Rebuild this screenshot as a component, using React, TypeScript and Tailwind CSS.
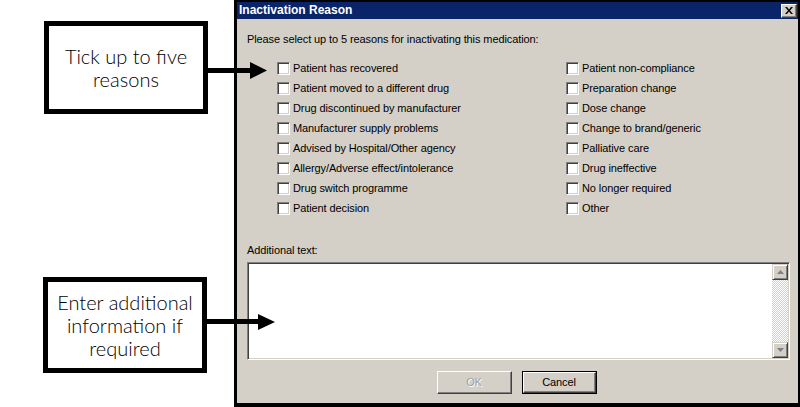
import React from "react";

const LEFT_REASONS = [
  "Patient has recovered",
  "Patient moved to a different drug",
  "Drug discontinued by manufacturer",
  "Manufacturer supply problems",
  "Advised by Hospital/Other agency",
  "Allergy/Adverse effect/intolerance",
  "Drug switch programme",
  "Patient decision",
];

const RIGHT_REASONS = [
  "Patient non-compliance",
  "Preparation change",
  "Dose change",
  "Change to brand/generic",
  "Palliative care",
  "Drug ineffective",
  "No longer required",
  "Other",
];

const SUNKEN =
  "border border-t-[#808080] border-l-[#808080] border-r-white border-b-white shadow-[inset_1px_1px_0_#404040,inset_-1px_-1px_0_#d4d0c8]";

const RAISED =
  "border border-t-white border-l-white border-r-[#404040] border-b-[#404040] shadow-[inset_-1px_-1px_0_#808080]";

const SCROLL_BTN =
  "flex h-4 w-4 items-center justify-center border border-t-[#d4d0c8] border-l-[#d4d0c8] border-r-[#404040] border-b-[#404040] bg-[#d4d0c8] shadow-[inset_1px_1px_0_#fff,inset_-1px_-1px_0_#808080]";

function Checkbox({ label }: { label: string }) {
  return (
    <div className="flex h-5 items-center">
      <span className={`h-[13px] w-[13px] shrink-0 bg-white ${SUNKEN}`} />
      <span className="ml-[3px] whitespace-nowrap">{label}</span>
    </div>
  );
}

function Callout({ lines, className }: { lines: string[]; className: string }) {
  return (
    <div
      className={`flex w-[164px] flex-col items-center justify-center border-[5px] border-black bg-white text-center font-['Lato',sans-serif] text-[20px] font-light leading-[23px] text-black ${className}`}
    >
      {lines.map((l) => (
        <span key={l}>{l}</span>
      ))}
    </div>
  );
}

export default function App() {
  return (
    <div className="relative flex h-[407px] w-[800px] overflow-hidden bg-white">
      {/* callouts column */}
      <div className="flex w-[234px] shrink-0 flex-col pl-[43px]">
        <Callout lines={["Tick up to five", "reasons"]} className="ml-px mt-[21px] h-[93px]" />
        <Callout
          lines={["Enter additional", "information if", "required"]}
          className="mt-[163px] h-[96px]"
        />
      </div>

      {/* dialog */}
      <div className="flex flex-1 flex-col border-b-4 border-l-[3px] border-r-2 border-t-2 border-black bg-[#d4d0c8] font-['Liberation_Sans',Arial,sans-serif] text-[11px] leading-[13px] tracking-[-0.1px] text-black">
        <div className="flex h-[17px] items-center justify-between bg-[#0a246a] pl-[2px] pr-px">
          <span className="text-[12px] font-bold tracking-normal text-white">Inactivation Reason</span>
          <button className={`flex h-[14px] w-4 items-center justify-center bg-[#d4d0c8] ${RAISED}`}>
            <svg width="8" height="7" viewBox="0 0 8 7">
              <path d="M0 0h2l2 2.5L6 0h2L5 3.5 8 7H6L4 4.5 2 7H0l3-3.5z" fill="#000" />
            </svg>
          </button>
        </div>

        <div className="flex flex-1 flex-col pl-[10px] pr-2 pt-[14px]">
          <p>Please select up to 5 reasons for inactivating this medication:</p>

          <div className="mt-3 flex pl-[30px]">
            <div className="flex w-[289px] flex-col">
              {LEFT_REASONS.map((r) => (
                <Checkbox key={r} label={r} />
              ))}
            </div>
            <div className="flex flex-col">
              {RIGHT_REASONS.map((r) => (
                <Checkbox key={r} label={r} />
              ))}
            </div>
          </div>

          <p className="mt-[26px]">Additional text:</p>

          <div className={`mt-[5px] flex h-[98px] bg-white p-px ${SUNKEN}`}>
            <div className="flex-1" />
            <div className="flex w-4 flex-col">
              <div className={SCROLL_BTN}>
                <svg width="7" height="4" viewBox="0 0 7 4">
                  <path d="M3.5 0L7 4H0z" fill="#808080" />
                </svg>
              </div>
              <div className="flex-1 bg-[repeating-conic-gradient(#d4d0c8_0%_25%,#ffffff_0%_50%)] bg-[length:2px_2px]" />
              <div className={SCROLL_BTN}>
                <svg width="7" height="4" viewBox="0 0 7 4">
                  <path d="M0 0h7L3.5 4z" fill="#808080" />
                </svg>
              </div>
            </div>
          </div>

          <div className="mt-[11px] flex justify-center gap-[10px] pr-1">
            <button className={`h-[23px] w-[75px] bg-[#d4d0c8] text-[#a0a0a0] [text-shadow:1px_1px_0_#fff] ${RAISED}`}>
              OK
            </button>
            <div className="border border-black">
              <button className={`h-[21px] w-[73px] bg-[#d4d0c8] ${RAISED}`}>Cancel</button>
            </div>
          </div>
        </div>
      </div>

      {/* arrows */}
      <svg className="pointer-events-none absolute inset-0" width="800" height="407">
        <rect x="208" y="68" width="43" height="5" fill="#000" />
        <polygon points="250,62 250,79 267,70.5" fill="#000" />
        <rect x="207" y="319" width="52" height="5" fill="#000" />
        <polygon points="258,314 258,330 275,322" fill="#000" />
      </svg>
    </div>
  );
}
